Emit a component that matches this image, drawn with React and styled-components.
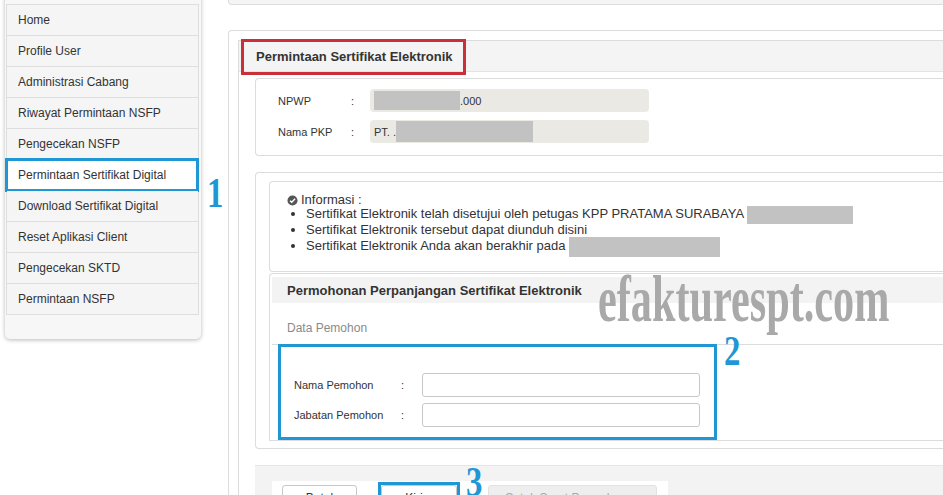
import React from 'react';
import styled, { createGlobalStyle } from 'styled-components';

const blue = '#1f97d4';

const GlobalStyle = createGlobalStyle`
  html, body {
    margin: 0;
    padding: 0;
    background: #fff;
  }
  body {
    font-family: "Liberation Sans", Arial, sans-serif;
    color: #333;
  }
`;

const Page = styled.div`
  position: relative;
  width: 943px;
  height: 495px;
  overflow: hidden;
  display: grid;
  grid-template-columns: 228px 1fr;
`;

const SideCol = styled.div`
  padding-left: 5px;
`;

const SideCard = styled.div`
  width: 196px;
  margin-top: -20px;
  padding: 24px 2px 24px 1px;
  box-sizing: border-box;
  background: #f7f7f7;
  border-radius: 0 0 5px 5px;
  box-shadow: 0 1px 4px rgba(0, 0, 0, 0.28);
`;

const Menu = styled.ul`
  list-style: none;
  margin: 0;
  padding: 0;
  border: 1px solid #dedede;
  border-bottom: none;
`;

const MenuItem = styled.li`
  position: relative;
  height: 30px;
  display: flex;
  align-items: center;
  padding-left: 11px;
  font-size: 12px;
  color: #333;
  background: ${p => (p.$active ? '#fff' : '#f5f5f5')};
  border-bottom: 1px solid #dedede;

  ${p => p.$active && `
    &::after {
      content: '';
      position: absolute;
      inset: -2px -1px -2px -2px;
      border: 3px solid ${blue};
    }
  `}
`;

const MainCol = styled.div`
  display: flex;
  flex-direction: column;
  min-width: 0;
`;

const TopPanel = styled.div`
  height: 4px;
  background: #f5f5f5;
  border: 1px solid #dcdcdc;
  border-top: none;
  border-right: none;
  border-radius: 0 0 0 4px;
`;

const MainPanel = styled.div`
  flex: 1;
  margin-top: 25px;
  padding: 9px 0 0 9px;
  border: 1px solid #dcdcdc;
  border-right: none;
  border-bottom: none;
  border-top-left-radius: 4px;
`;

const InnerBox = styled.div`
  height: 100%;
  border-left: 1px solid #dcdcdc;
  border-top: 1px solid #dcdcdc;
`;

const PanelHeader = styled.div`
  height: 30px;
  display: flex;
  align-items: center;
  padding-left: 17px;
  background: #f4f4f4;
  border-bottom: 1px solid #e4e4e4;
`;

const PanelTitle = styled.span`
  position: relative;
  font-size: 13px;
  line-height: 15px;
  font-weight: bold;
  color: #333;

  &::after {
    content: '';
    position: absolute;
    inset: -10px -13px -11px -15px;
    border: 3px solid #c9303a;
  }
`;

const PanelBody = styled.div`
  padding-left: 16px;
`;

const Box = styled.div`
  border: 1px solid #dcdcdc;
  border-right: none;
  border-radius: 4px 0 0 4px;
`;

const NpwpBox = styled(Box)`
  margin-top: 6px;
  padding: 10px 0 12px 22px;
  display: flex;
  flex-direction: column;
  gap: 8px;
`;

const FieldRow = styled.div`
  display: grid;
  grid-template-columns: 73px 19px 279px;
  align-items: center;
  font-size: 11px;
  color: #333;
`;

const ReadField = styled.div`
  height: 23px;
  display: flex;
  align-items: center;
  padding-left: 4px;
  background: #ebe9e4;
  border-radius: 4px;
  font-size: 11px;
`;

const Redact = styled.span`
  display: inline-block;
  width: ${p => p.$w}px;
  height: ${p => p.$h || 19}px;
  margin: -4px 0;
  background: #c2c2c2;
  vertical-align: middle;
`;

const InfoOuter = styled(Box)`
  margin-top: 16px;
  padding: 8px 0 7px 13px;
`;

const InfoBox = styled(Box)`
  padding: 10px 0 17px 17px;
  font-size: 13px;
  line-height: 16px;
  color: #333;
`;

const InfoTitle = styled.div`
  display: flex;
  align-items: center;
  gap: 3px;
  height: 16px;
`;

const InfoList = styled.ul`
  margin: -2px 0 0;
  padding-left: 19px;

  li {
    height: 16px;
    line-height: 16px;
  }
`;

const RequestBox = styled.div`
  margin-top: 1px;
  padding: 3px 0 0 2px;
  border: 1px solid #dcdcdc;
  border-right: none;
  border-top-left-radius: 4px;
`;

const SubHeader = styled.div`
  height: 26px;
  display: flex;
  align-items: center;
  padding-left: 15px;
  background: #f3f3f3;
  font-size: 13px;
  font-weight: bold;
  color: #333;
`;

const SectionLabel = styled.div`
  margin: 17px 0 8px 15px;
  font-size: 12px;
  line-height: 16px;
  color: #8a8a8a;
`;

const FormSection = styled.div`
  border-top: 1px solid #dcdcdc;
`;

const FormBox = styled.div`
  width: 439px;
  box-sizing: border-box;
  margin: -1px 0 0 6px;
  padding: 26px 0 10px 13px;
  border: 3px solid ${blue};
  display: flex;
  flex-direction: column;
  gap: 6px;
`;

const FormRow = styled.div`
  display: grid;
  grid-template-columns: 107px 21px 278px;
  align-items: center;
  font-size: 11px;
  color: #333;
`;

const TextInput = styled.input`
  height: 24px;
  box-sizing: border-box;
  border: 1px solid #c8c8c8;
  border-radius: 3px;
  padding: 0 6px;
  font: inherit;
`;

const Footer = styled.div`
  margin-top: 16px;
  padding: 15px 0 0 17px;
  background: #f3f3f3;
  border-top: 1px solid #e6e6e6;
  height: 40px;
`;

const FooterInner = styled.div`
  width: 396px;
  height: 40px;
  box-sizing: border-box;
  padding: 4px 0 0 10px;
  background: #fff;
  display: flex;
`;

const Button = styled.button`
  position: relative;
  width: ${p => p.$w}px;
  height: 30px;
  margin-left: ${p => p.$ml || 0}px;
  padding: 5px 0 0;
  box-sizing: border-box;
  border: 1px solid ${p => (p.$muted ? '#e2e2e2' : '#c8c8c8')};
  border-radius: 3px;
  background: ${p => (p.$muted ? '#eeeeee' : '#fff')};
  color: ${p => (p.$muted ? '#aaa' : '#333')};
  font-family: "Liberation Sans", Arial, sans-serif;
  font-size: 12px;
  line-height: 14px;
  align-self: flex-start;
  display: flex;
  justify-content: center;
  align-items: flex-start;

  ${p => p.$marked && `
    &::after {
      content: '';
      position: absolute;
      inset: -4px -4px -4px -4px;
      border: 3px solid ${blue};
    }
  `}
`;

const StepNumber = styled.div`
  position: absolute;
  left: ${p => p.$x}px;
  top: ${p => p.$y}px;
  font-family: "Liberation Serif", "Times New Roman", serif;
  font-weight: bold;
  font-size: 42px;
  line-height: 42px;
  color: ${blue};
  transform: scaleX(0.78);
  transform-origin: left top;
`;

const Watermark = styled.div`
  position: absolute;
  left: 598px;
  top: 266px;
  font-family: "Liberation Serif", "Times New Roman", serif;
  font-weight: bold;
  font-size: 66px;
  line-height: 66px;
  color: #a9a9a9;
  transform: scaleX(0.64);
  transform-origin: left top;
  white-space: nowrap;
  pointer-events: none;
`;

const CheckCircle = () => (
  <svg width="11" height="11" viewBox="0 0 12 12">
    <circle cx="6" cy="6" r="5.5" fill="#555" />
    <path d="M3.3 6.2 L5.2 8 L8.8 4.2" stroke="#fff" strokeWidth="1.6" fill="none" />
  </svg>
);

const menu = [
  'Home',
  'Profile User',
  'Administrasi Cabang',
  'Riwayat Permintaan NSFP',
  'Pengecekan NSFP',
  'Permintaan Sertifikat Digital',
  'Download Sertifikat Digital',
  'Reset Aplikasi Client',
  'Pengecekan SKTD',
  'Permintaan NSFP',
];

export default function App() {
  return (
    <Page>
      <GlobalStyle />
      <SideCol>
        <SideCard>
          <Menu>
            {menu.map(item => (
              <MenuItem key={item} $active={item === 'Permintaan Sertifikat Digital'}>
                {item}
              </MenuItem>
            ))}
          </Menu>
        </SideCard>
      </SideCol>

      <MainCol>
        <TopPanel />
        <MainPanel>
          <InnerBox>
            <PanelHeader>
              <PanelTitle>Permintaan Sertifikat Elektronik</PanelTitle>
            </PanelHeader>
            <PanelBody>
              <NpwpBox>
                <FieldRow>
                  <span>NPWP</span>
                  <span>:</span>
                  <ReadField>
                    <Redact $w={86} />.000
                  </ReadField>
                </FieldRow>
                <FieldRow>
                  <span>Nama PKP</span>
                  <span>:</span>
                  <ReadField>
                    PT. .<Redact $w={137} $h={21} />
                  </ReadField>
                </FieldRow>
              </NpwpBox>

              <InfoOuter>
                <InfoBox>
                  <InfoTitle>
                    <CheckCircle />
                    Informasi :
                  </InfoTitle>
                  <InfoList>
                    <li>
                      Sertifikat Elektronik telah disetujui oleh petugas KPP PRATAMA SURABAYA{' '}
                      <Redact $w={106} $h={18} />
                    </li>
                    <li>Sertifikat Elektronik tersebut dapat diunduh disini</li>
                    <li>
                      Sertifikat Elektronik Anda akan berakhir pada <Redact $w={151} $h={20} />
                    </li>
                  </InfoList>
                </InfoBox>

                <RequestBox>
                  <SubHeader>Permohonan Perpanjangan Sertifikat Elektronik</SubHeader>
                  <SectionLabel>Data Pemohon</SectionLabel>
                  <FormSection>
                    <FormBox>
                      <FormRow>
                        <span>Nama Pemohon</span>
                        <span>:</span>
                        <TextInput />
                      </FormRow>
                      <FormRow>
                        <span>Jabatan Pemohon</span>
                        <span>:</span>
                        <TextInput />
                      </FormRow>
                    </FormBox>
                  </FormSection>
                </RequestBox>
              </InfoOuter>

              <Footer>
                <FooterInner>
                  <Button $w={75}>Batal</Button>
                  <Button $w={76} $ml={24} $marked>Kirim</Button>
                  <Button $w={169} $ml={31} $muted>Cetak Surat Permohonan</Button>
                </FooterInner>
              </Footer>
            </PanelBody>
          </InnerBox>
        </MainPanel>
      </MainCol>

      <Watermark>efakturespt.com</Watermark>
      <StepNumber $x={207} $y={172}>1</StepNumber>
      <StepNumber $x={724} $y={330}>2</StepNumber>
      <StepNumber $x={466} $y={461}>3</StepNumber>
    </Page>
  );
}
